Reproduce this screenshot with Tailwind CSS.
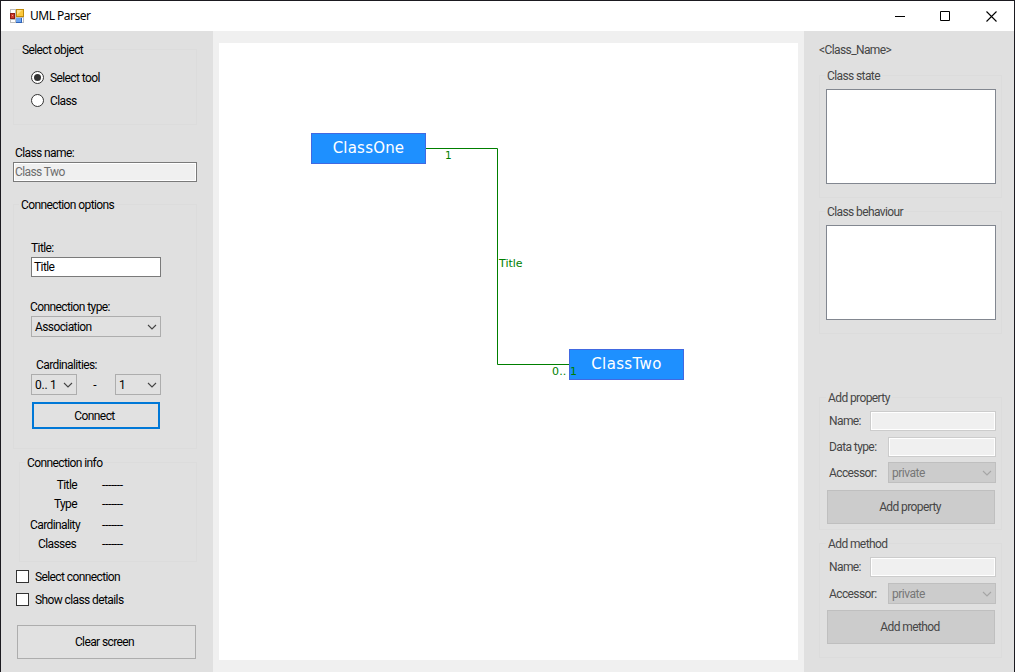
<!DOCTYPE html>
<html lang="en">
<head>
<meta charset="utf-8">
<title>UML Parser</title>
<script src="https://cdn.jsdelivr.net/npm/@tailwindcss/browser@4"></script>
</head>
<body class="w-[1015px] h-[672px] overflow-hidden bg-[#f0f0f0] font-['Roboto',sans-serif] text-[12px] leading-[14px] tracking-[-0.6px] text-black">
<div class="flex flex-col w-full h-full border-t border-x border-[#1b1a20]">
  <header class="flex items-center h-[30px] shrink-0 bg-white">
    <svg class="ml-[9px] shrink-0" width="14" height="14" viewBox="0 0 14 14">
      <rect width="14" height="14" fill="#bdbdbd"/>
      <path d="M1 1h4v3H1zM1 11h4v2H1zM12 9h1v4h-1z" fill="#fff"/>
      <rect x="0" y="4" width="5" height="6" fill="#8e1b12"/><rect x="1" y="5" width="3" height="4" fill="#cf3a2c"/><rect x="2" y="6" width="1" height="1" fill="#f09a8c"/>
      <rect x="6" y="0" width="8" height="8" fill="#c08a08"/><rect x="7" y="1" width="6" height="6" fill="#fbc83c"/><path d="M7 1h5L7 6z" fill="#fde08a"/>
      <rect x="6" y="9" width="6" height="5" fill="#2f63b8"/><rect x="6" y="9" width="5" height="4" fill="#6da4ee"/>
    </svg>
    <h1 class="ml-[6px] font-['Noto_Sans',sans-serif] text-[12px] leading-[16px] tracking-[-0.5px]">UML Parser</h1>
    <div class="ml-auto flex items-center mr-[17px] gap-[35px]">
      <svg width="10" height="10" viewBox="0 0 10 10"><path d="M0 5.5h10" stroke="#000"/></svg>
      <svg width="10" height="10" viewBox="0 0 10 10"><path d="M.5.5h9v9h-9z" fill="none" stroke="#000"/></svg>
      <svg class="ml-px" width="11" height="11" viewBox="0 0 11 11"><path d="M.5.5l10 10M10.500 .5l-10 10" stroke="#000" stroke-width="1.1"/></svg>
    </div>
  </header>
  <main class="flex flex-1 min-h-0">
    <aside class="w-[212px] shrink-0 bg-[#e0e0e0] pl-[12px] pt-[18px] flex flex-col items-start">
      <section class="w-[184px] h-[76px] shrink-0 border border-[#dcdcdc] pl-[17px]">
        <h2 class="w-fit -mt-[7px] -ml-[11px] px-[2px] bg-[#e0e0e0]">Select object</h2>
        <label class="flex items-start gap-[6px] mt-[14px] h-[14px]"><svg width="13" height="13" viewBox="0 0 13 13"><circle cx="6.500" cy="6.500" r="6" fill="#fff" stroke="#333"/><circle cx="6.500" cy="6.500" r="3.500" fill="#333"/></svg>Select tool</label>
        <label class="flex items-start gap-[6px] mt-[9px] h-[14px]"><svg width="13" height="13" viewBox="0 0 13 13"><circle cx="6.500" cy="6.500" r="6" fill="#fff" stroke="#333"/></svg>Class</label>
      </section>
      <label class="mt-[21px] ml-[2px] h-[14px]">Class name:</label>
      <div class="mt-[2px] w-[184px] h-[20px] shrink-0 border border-[#7a7a7a] bg-white p-px"><div class="h-full bg-[#f0f0f0] leading-[17px] tracking-[-0.6px] text-[#6d6d6d]">Class Two</div></div>
      <section class="mt-[22px] w-[184px] h-[245px] shrink-0 border border-[#dcdcdc] pl-[17px] flex flex-col items-start">
        <h2 class="-mt-[7px] -ml-[12px] px-[2px] bg-[#e0e0e0]">Connection options</h2>
        <label class="mt-[29px]">Title:</label>
        <div class="mt-[2px] w-[130px] h-[20px] border border-[#7a7a7a] bg-white pl-[2px] leading-[19px]">Title</div>
        <label class="mt-[23px] -ml-px">Connection type:</label>
        <div class="mt-[2px] w-[130px] h-[21px] border border-[#adadad] bg-[#e1e1e1] pl-[3px] pr-[3px] flex items-center justify-between">Association<svg width="10" height="6" viewBox="0 0 10 6"><path d="M1 1l4 4 4-4" fill="none" stroke="#444" stroke-width="1.1"/></svg></div>
        <label class="mt-[21px] ml-[5px]">Cardinalities:</label>
        <div class="mt-[2px] w-[130px] flex items-center justify-between">
          <div class="w-[46px] h-[21px] border border-[#adadad] bg-[#e1e1e1] px-[3px] flex items-center justify-between tracking-[-0.25px]">0.. 1<svg width="10" height="6" viewBox="0 0 10 6"><path d="M1 1l4 4 4-4" fill="none" stroke="#444" stroke-width="1.1"/></svg></div>
          <span class="mr-[3px]">-</span>
          <div class="w-[46px] h-[21px] border border-[#adadad] bg-[#e1e1e1] px-[3px] flex items-center justify-between">1<svg width="10" height="6" viewBox="0 0 10 6"><path d="M1 1l4 4 4-4" fill="none" stroke="#444" stroke-width="1.1"/></svg></div>
        </div>
        <button class="mt-[7px] ml-px w-[128px] h-[27px] border-2 border-[#0078d7] bg-[#e1e1e1] pr-[3px]">Connect</button>
      </section>
      <section class="mt-[13px] ml-[6px] w-[178px] h-[100px] shrink-0 border border-[#dcdcdc] pl-[10px]">
        <h2 class="w-fit -mt-[7px] -ml-[5px] px-[2px] bg-[#e0e0e0]">Connection info</h2>
        <dl class="mt-[8px] grid grid-cols-[48px_24px] gap-x-[24px] grid-rows-[19px_21px_19px_14px]">
          <dt class="text-right pr-px">Title</dt><dd class="tracking-[-0.35px]">-------</dd>
          <dt class="text-right pr-px">Type</dt><dd class="tracking-[-0.35px]">-------</dd>
          <dt class="text-right">Cardinality</dt><dd class="tracking-[-0.35px]">-------</dd>
          <dt class="text-right pr-[2px]">Classes</dt><dd class="tracking-[-0.35px]">-------</dd>
        </dl>
      </section>
      <label class="mt-[8px] ml-[3px] flex items-start gap-[6px] h-[14px]"><span class="size-[13px] border border-[#333] bg-white"></span>Select connection</label>
      <label class="mt-[9px] ml-[3px] flex items-start gap-[6px] h-[14px]"><span class="size-[13px] border border-[#333] bg-white"></span>Show class details</label>
      <button class="mt-[18px] ml-[4px] w-[179px] h-[34px] shrink-0 border border-[#adadad] bg-[#e1e1e1] pr-[4px]">Clear screen</button>
    </aside>

    <div class="relative ml-[6px] mt-[12px] w-[579px] h-[617px] shrink-0 bg-white font-['DejaVu_Sans',sans-serif] tracking-normal">
      <svg class="absolute inset-0" width="579" height="617"><path d="M207 105.500h71.500v216H350" fill="none" stroke="#007f00"/></svg>
      <div class="absolute left-[92px] top-[90px] w-[115px] h-[31px] border border-[#4169e1] bg-[#1e90ff] text-white text-[15px] leading-[28px] tracking-[0.2px] text-center">ClassOne</div>
      <div class="absolute left-[350px] top-[306px] w-[115px] h-[31px] border border-[#4169e1] bg-[#1e90ff] text-white text-[15px] leading-[28px] tracking-[0.35px] text-center">ClassTwo</div>
      <span class="absolute left-[226px] top-[105px] text-[10.500px] text-[#007f00]">1</span>
      <span class="absolute left-[280px] top-[214px] text-[11px] text-[#007f00]">Title</span>
      <span class="absolute left-[333px] top-[322px] text-[11px] tracking-[0.15px] text-[#007f00] whitespace-pre">0.. 1</span>
    </div>

    <aside class="ml-[6px] w-[210px] shrink-0 bg-[#e0e0e0] pl-[15px] pt-[12px] flex flex-col items-start text-[#464646]">
      <p class="h-[14px]">&lt;Class_Name&gt;</p>
      <section class="mt-[18px] w-[183px] h-[123px] shrink-0 border border-[#dcdcdc] pl-[6px]">
        <h2 class="w-fit -mt-[7px] -ml-px px-[2px] bg-[#e0e0e0]">Class state</h2>
        <div class="mt-[6px] w-[170px] h-[95px] border border-[#828790] bg-white"></div>
      </section>
      <section class="mt-[13px] w-[183px] h-[123px] shrink-0 border border-[#dcdcdc] pl-[6px]">
        <h2 class="w-fit -mt-[7px] -ml-px px-[2px] bg-[#e0e0e0]">Class behaviour</h2>
        <div class="mt-[6px] w-[170px] h-[95px] border border-[#828790] bg-white"></div>
      </section>
      <section class="mt-[63px] w-[183px] h-[133px] shrink-0 border border-[#dcdcdc] pl-[7px] pr-[5px]">
        <h2 class="w-fit -mt-[7px] -ml-px px-[2px] bg-[#e0e0e0]">Add property</h2>
        <div class="mt-[6px] flex items-center justify-between pl-[2px]"><label>Name:</label><div class="w-[126px] h-[20px] border border-[#ccc] bg-white p-px"><div class="h-full bg-[#f0f0f0]"></div></div></div>
        <div class="mt-[6px] flex items-center justify-between pl-[2px]"><label>Data type:</label><div class="w-[108px] h-[20px] border border-[#ccc] bg-white p-px"><div class="h-full bg-[#f0f0f0]"></div></div></div>
        <div class="mt-[5px] flex items-center justify-between pl-[2px]"><label>Accessor:</label><div class="w-[108px] h-[21px] border border-[#bfbfbf] bg-[#ccc] px-[3px] flex items-center justify-between tracking-[-0.5px] text-[#777]">private<svg width="10" height="6" viewBox="0 0 10 6"><path d="M1 1l4 4 4-4" fill="none" stroke="#a5a5a5" stroke-width="1.1"/></svg></div></div>
        <button class="mt-[7px] w-[168px] h-[34px] border border-[#bfbfbf] bg-[#ccc] pr-[2px]">Add property</button>
      </section>
      <section class="mt-[13px] w-[183px] h-[115px] shrink-0 border border-[#dcdcdc] pl-[7px] pr-[5px]">
        <h2 class="w-fit -mt-[7px] -ml-px px-[2px] bg-[#e0e0e0]">Add method</h2>
        <div class="mt-[6px] flex items-center justify-between pl-[2px]"><label>Name:</label><div class="w-[126px] h-[20px] border border-[#ccc] bg-white p-px"><div class="h-full bg-[#f0f0f0]"></div></div></div>
        <div class="mt-[6px] flex items-center justify-between pl-[2px]"><label>Accessor:</label><div class="w-[108px] h-[21px] border border-[#bfbfbf] bg-[#ccc] px-[3px] flex items-center justify-between tracking-[-0.5px] text-[#777]">private<svg width="10" height="6" viewBox="0 0 10 6"><path d="M1 1l4 4 4-4" fill="none" stroke="#a5a5a5" stroke-width="1.1"/></svg></div></div>
        <button class="mt-[6px] w-[168px] h-[34px] border border-[#bfbfbf] bg-[#ccc] pr-[2px]">Add method</button>
      </section>
    </aside>
  </main>
</div>
</body>
</html>
